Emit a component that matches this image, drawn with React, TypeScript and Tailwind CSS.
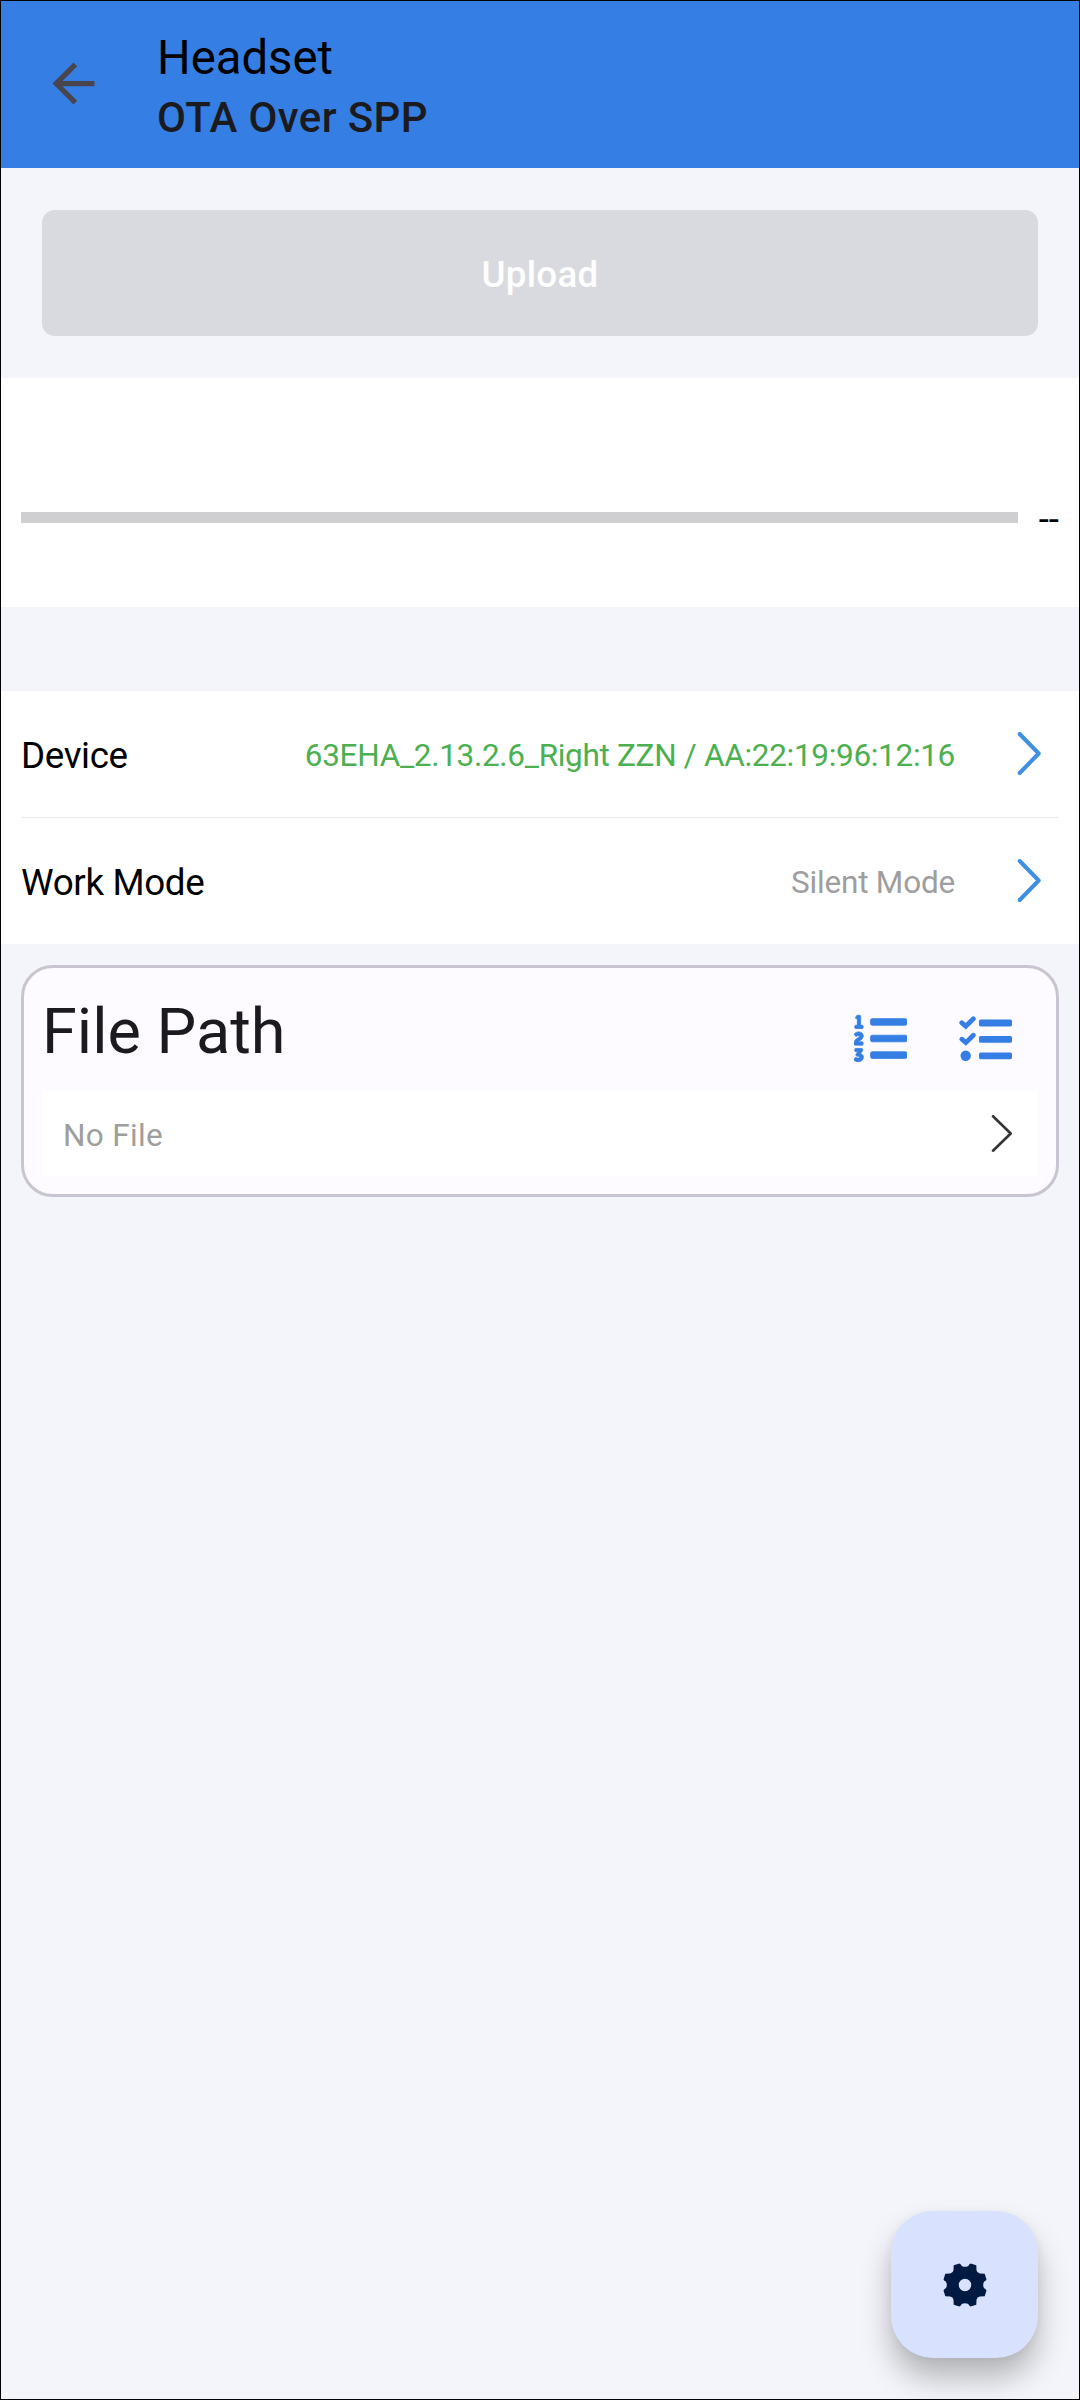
import type { ReactNode } from 'react'
import { FaListOl } from 'react-icons/fa'

interface RowProps {
  label: string
  children: ReactNode
}

function BackArrow() {
  return (
    <svg className="size-[63px]" viewBox="0 0 24 24" fill="#49454f">
      <path d="M20,11H7.83l5.59,-5.59L12,4l-8,8 8,8 1.41,-1.41L7.83,13H20v-2z" />
    </svg>
  )
}

function Chevron() {
  return (
    <svg
      className="h-[44px] w-[26px] shrink-0"
      viewBox="0 0 26 44"
      fill="none"
      stroke="#3f8fe3"
      strokeWidth="4"
      strokeLinecap="round"
      strokeLinejoin="round"
    >
      <path d="M2.7 2L21.7 21.5L2.7 41" />
    </svg>
  )
}

function CheckList() {
  return (
    <svg className="h-[49px] w-[55px]" viewBox="0 0 55 49" fill="#357fe4">
      <g fill="none" stroke="#357fe4" strokeWidth="4.8" strokeLinecap="round">
        <path d="M3.8 8.8L7.8 12.2L15.4 4.8" />
        <path d="M3.8 25.2L7.8 28.6L15.4 21.2" />
      </g>
      <circle cx="7.7" cy="41.7" r="5.2" />
      <rect x="21" y="5.6" width="33" height="6.8" rx="1.6" />
      <rect x="21" y="22" width="33" height="6.8" rx="1.6" />
      <rect x="21" y="38.4" width="33" height="6.8" rx="1.6" />
    </svg>
  )
}

function Gear() {
  return (
    <svg className="size-[44px]" viewBox="-22 -22 44 44" fill="#001a41">
      <path
        fillRule="evenodd"
        d="M0-18.2Q3.4-18.2 4.2-20.6L5.6-21.5L11.3-19.7L11.5-14.8Q12-12 14.8-11.5L19.7-11.3L21.5-5.6L20.6-4.2Q18.2-3.4 18.2 0Q18.2 3.4 20.6 4.2L21.5 5.6L19.7 11.3L14.8 11.5Q12 12 11.5 14.8L11.3 19.7L5.6 21.5L4.2 20.6Q3.4 18.2 0 18.2Q-3.4 18.2-4.2 20.6L-5.6 21.5L-11.3 19.7L-11.5 14.8Q-12 12-14.8 11.5L-19.7 11.3L-21.5 5.6L-20.6 4.2Q-18.2 3.4-18.2 0Q-18.2-3.4-20.6-4.2L-21.5-5.6L-19.7-11.3L-14.8-11.5Q-12-12-11.5-14.8L-11.3-19.7L-5.6-21.5L-4.2-20.6Q-3.4-18.2 0-18.2ZM0-6.2a6.2 6.2 0 1 0 0 12.4a6.2 6.2 0 1 0 0-12.4Z"
      />
    </svg>
  )
}

function Row({ label, children }: RowProps) {
  return (
    <div className="flex h-[126px] items-center pr-[16px]">
      <span className="pt-[3px] text-[36.75px] tracking-[-0.35px] text-black">{label}</span>
      <span className="ml-auto mr-[62px] pt-[3px] text-[31.5px]">{children}</span>
      <Chevron />
    </div>
  )
}

export default function App() {
  return (
    <div className="relative flex h-[2400px] w-[1080px] flex-col border border-black bg-[#f3f5fa] font-['Roboto',sans-serif]">
      <header className="flex h-[167px] shrink-0 items-center bg-[#357fe4] pb-[2px] pl-[41px]">
        <BackArrow />
        <div className="ml-[52px] pt-[8px]">
          <h1 className="text-[47.25px] leading-[60px] text-black">Headset</h1>
          <h2 className="text-[42px] font-medium leading-[60px] tracking-[0.4px] text-[#1b1b1f]">
            OTA Over SPP
          </h2>
        </div>
      </header>

      <button className="mx-[41px] my-[42px] h-[126px] shrink-0 rounded-[13px] bg-[#d9dadf] pt-[4px] text-[36.75px] font-medium tracking-[0.3px] text-white">
        Upload
      </button>

      <section className="flex h-[229px] shrink-0 items-center bg-white px-[20px] pt-[50px]">
        <div className="h-[11px] flex-1 bg-[#cfcfd1]" />
        <span className="ml-[21px] pt-[4px] text-[36.75px] text-black">--</span>
      </section>

      <section className="mt-[84px] shrink-0 bg-white px-[20px]">
        <Row label="Device">
          <span className="tracking-[-0.31px] text-[#4caf50]">
            63EHA_2.13.2.6_Right ZZN / AA:22:19:96:12:16
          </span>
        </Row>
        <div className="h-px bg-[#ebebeb]" />
        <Row label="Work Mode">
          <span className="tracking-[-0.2px] text-[#9e9e9e]">Silent Mode</span>
        </Row>
      </section>

      <section className="mx-[20px] mt-[21px] h-[232px] shrink-0 rounded-[32px] border-3 border-[#c8c5d0] bg-[#fdfbff] px-[18px]">
        <div className="flex h-[123px] items-center">
          <h3 className="pt-[5px] text-[63px] leading-[74px] text-[#1b1b1f]">File Path</h3>
          <div className="ml-auto mr-[25px] flex items-center gap-[51px] pt-[18px]">
            <FaListOl className="size-[53px] text-[#357fe4]" stroke="currentColor" strokeWidth="8" />
            <CheckList />
          </div>
        </div>
        <div className="flex h-[85px] items-center bg-white pl-[21px] pr-[25px]">
          <span className="pt-[4px] text-[31.5px] tracking-[0.35px] text-[#9e9e9e]">No File</span>
          <svg
            className="ml-auto h-[38px] w-[22px]"
            viewBox="0 0 22 38"
            fill="none"
            stroke="#333333"
            strokeWidth="2.6"
            strokeLinecap="round"
            strokeLinejoin="round"
          >
            <path d="M2 1.3L19.7 18.5L2 35.7" />
          </svg>
        </div>
      </section>

      {/* floating action button */}
      <button className="absolute bottom-[41px] right-[41px] flex size-[147px] items-center justify-center rounded-[42px] bg-[#d8e2ff] shadow-[0_20px_30px_rgba(0,0,0,0.26),0_2px_10px_rgba(0,0,0,0.05)]">
        <Gear />
      </button>
    </div>
  )
}
